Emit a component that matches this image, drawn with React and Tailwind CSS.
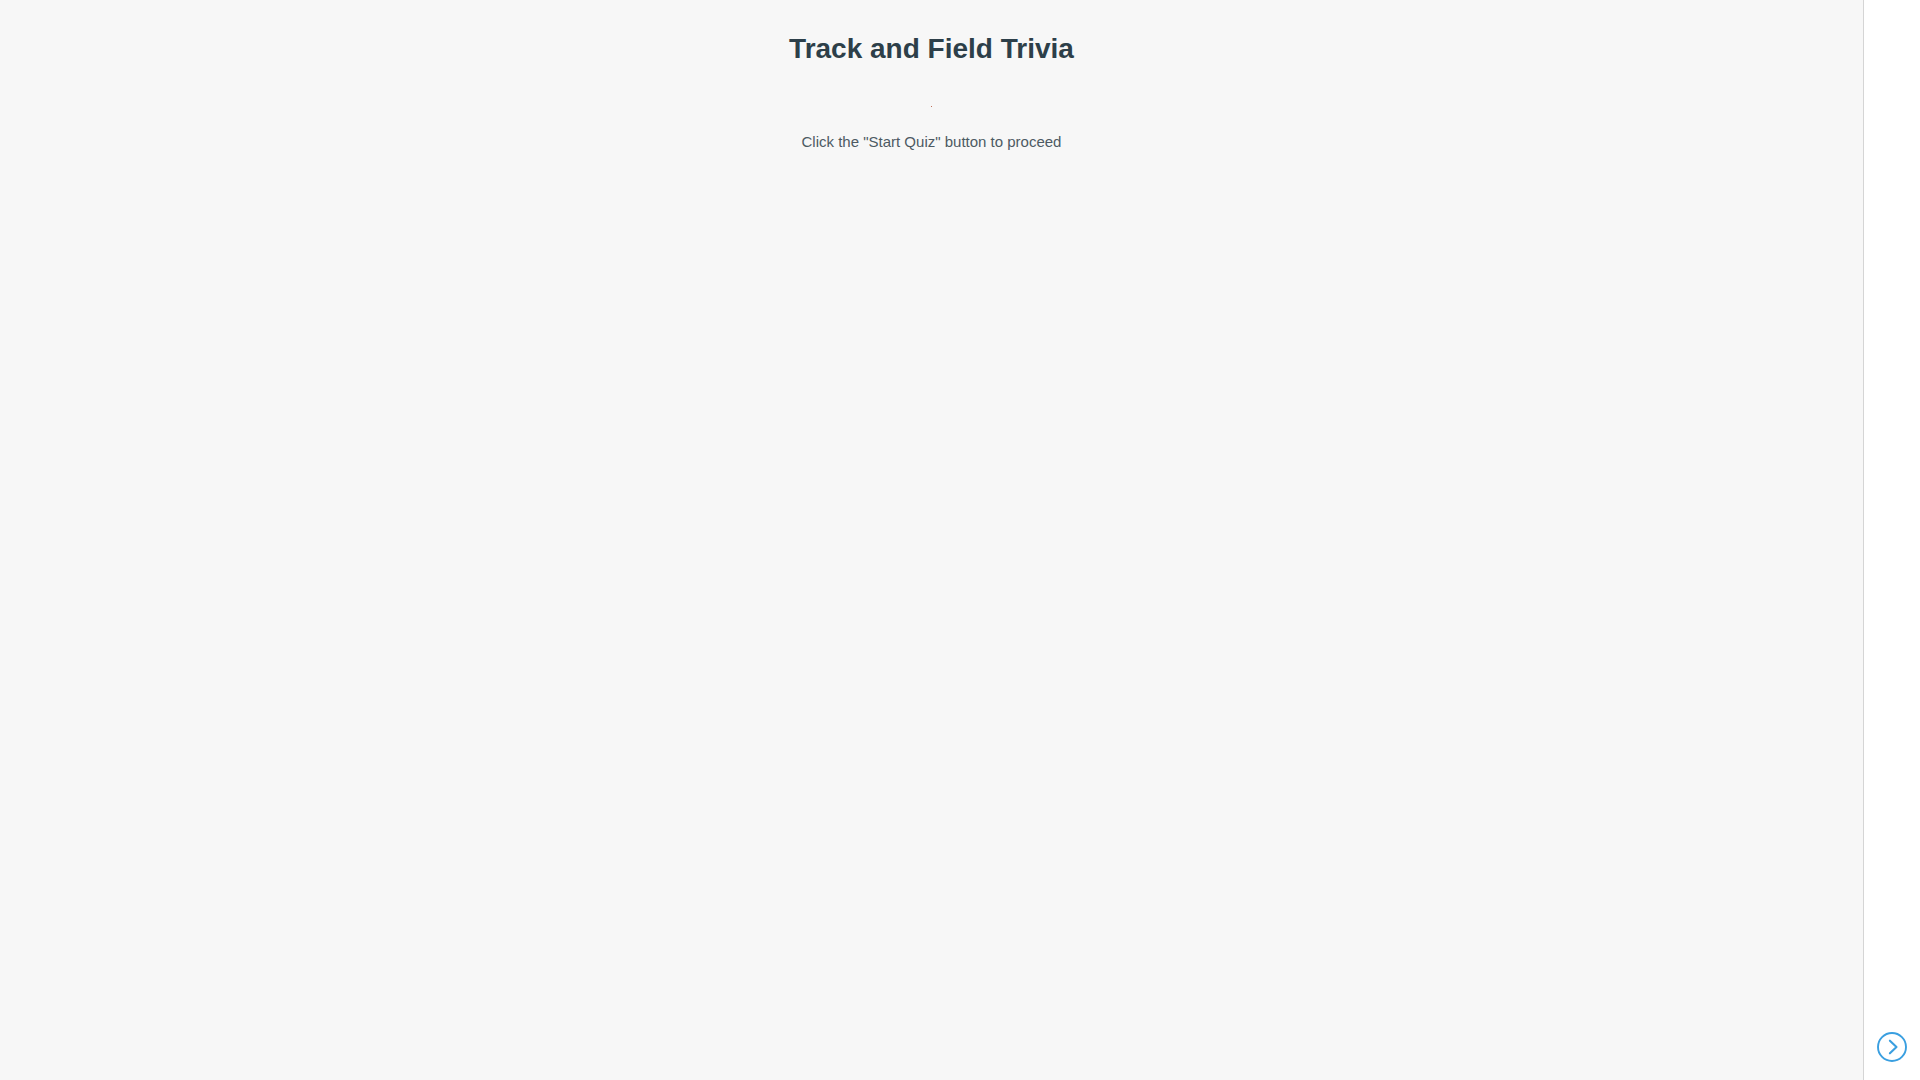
function App() {
  return (
    <div className="flex min-h-screen bg-[#f7f7f7] font-['Liberation_Sans',Arial,sans-serif]">
      <main className="flex flex-1 flex-col items-center pt-7 text-center">
        <h1 className="text-[28px] leading-[42px] font-bold text-[#2d3f49]">Track and Field Trivia</h1>
        <hr className="mt-9 w-px border-[#c0705a]" />
        <p className="mt-[23px] text-[15px] leading-6 text-[#4d5a63]">
          Click the "Start Quiz" button to proceed
        </p>
      </main>

      <aside className="flex w-[57px] flex-col items-center justify-end border-l border-[#d5d5d5] bg-white pb-[17px]">
        <button type="button" aria-label="Open panel" className="text-[#3a9fe0]">
          <svg className="h-8 w-8" viewBox="0 0 32 32" fill="none" stroke="currentColor">
            <circle cx="16" cy="16" r="14" strokeWidth="1.9" />
            <path d="M13.9 9.7l6.6 6.3-6.6 6.3" strokeWidth="2.1" strokeLinecap="round" strokeLinejoin="round" />
          </svg>
        </button>
      </aside>
    </div>
  )
}

export default App
